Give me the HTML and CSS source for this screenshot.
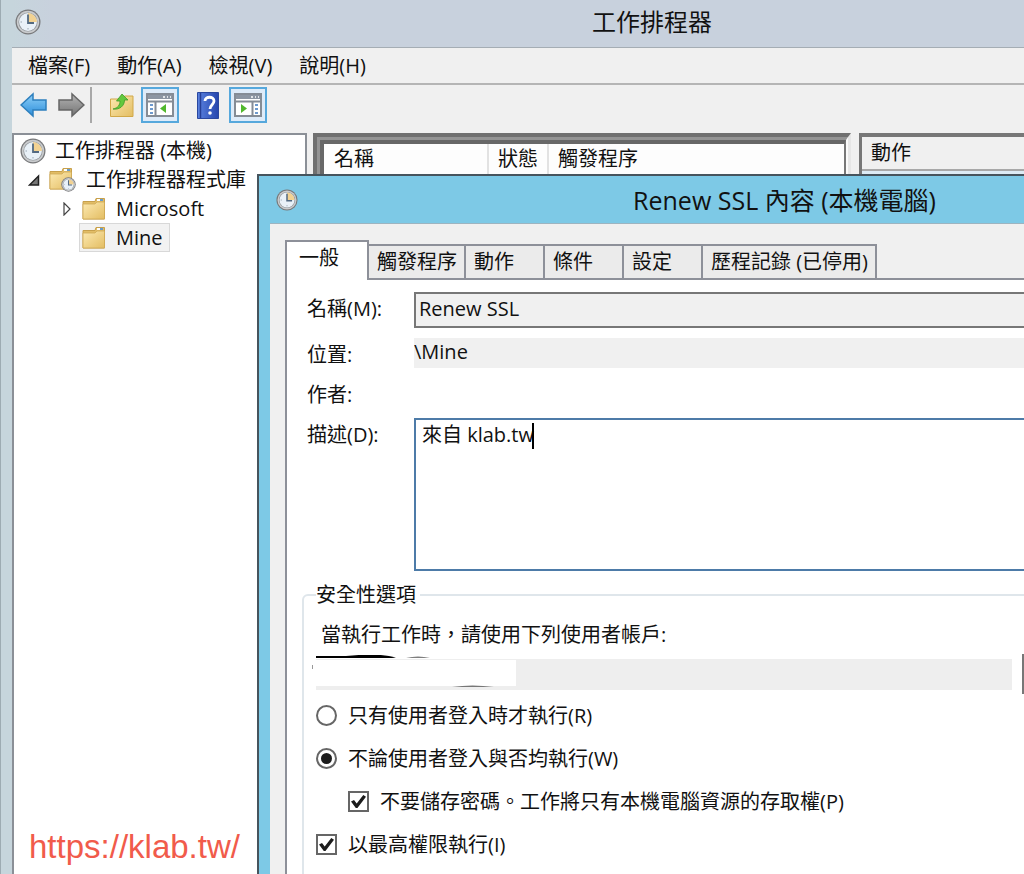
FILE: index.html
```html
<!DOCTYPE html>
<html lang="zh-Hant">
<head>
    <meta charset="UTF-8">
    <meta name="viewport" content="width=device-width, initial-scale=1.0">
    <title>工作排程器</title>
    <link rel="stylesheet" href="styles.css">
</head>
<body>
    <!-- shared icons -->
    <svg class="symbols" aria-hidden="true">
        <linearGradient id="folder-fill" x1="0" y1="0" x2="1" y2="1">
            <stop offset="0" stop-color="#fdeab2"/>
            <stop offset="1" stop-color="#e3bd62"/>
        </linearGradient>
        <linearGradient id="blue-fill" x1="0" y1="0" x2="0" y2="1">
            <stop offset="0" stop-color="#8fd0f8"/>
            <stop offset="1" stop-color="#2c8edb"/>
        </linearGradient>
        <linearGradient id="gray-fill" x1="0" y1="0" x2="0" y2="1">
            <stop offset="0" stop-color="#b4b4b4"/>
            <stop offset="1" stop-color="#747474"/>
        </linearGradient>
        <linearGradient id="help-fill" x1="0" y1="0" x2="1" y2="0">
            <stop offset="0" stop-color="#5b83e0"/>
            <stop offset="1" stop-color="#2545ad"/>
        </linearGradient>
        <symbol id="clock" viewBox="0 0 26 26">
            <circle cx="13" cy="13" r="12.5" fill="#77787a"/>
            <circle cx="13" cy="13" r="11.2" fill="#c9cbcd"/>
            <circle cx="13" cy="13" r="9.6" fill="#8f9499"/>
            <circle cx="13" cy="13" r="8.9" fill="#e9f1f8"/>
            <path d="M13 13V4.1A8.9 8.9 0 0 1 21.9 13Z" fill="#f2d292"/>
            <path d="M13 5.5V14H19" fill="none" stroke="#536a82" stroke-width="1.8"/>
            <path d="M5.5 13h1.5M13 19v1.5" stroke="#9aa7b3"/>
        </symbol>
        <symbol id="folder" viewBox="0 0 24 24">
            <path d="M1 4.5h12l1-3h8.5v20.5H1Z" fill="#e2bd66" stroke="#c7a04c"/>
            <rect x="15" y="2" width="6" height="2" fill="#fff"/>
            <rect x="18" y="2" width="3" height="2" fill="#6a9cc8"/>
            <path d="M1 7h12l2-2h7.5v17H1Z" fill="url(#folder-fill)" stroke="#cfa955" stroke-width=".8"/>
        </symbol>
    </svg>

    <div class="window">
        <header class="title-bar">
            <svg class="icon-clock"><use href="#clock"/></svg>
            <h1 class="title-text">工作排程器</h1>
        </header>

        <div class="client">
            <nav class="menu-bar">
                <button class="menu-item">檔案(F)</button>
                <button class="menu-item">動作(A)</button>
                <button class="menu-item">檢視(V)</button>
                <button class="menu-item">說明(H)</button>
            </nav>

            <div class="toolbar">
                <button class="tool" aria-label="上一頁">
                    <svg width="28" height="26" viewBox="0 0 28 26"><path d="M1 13 13 2v6h13v10H13v6Z" fill="url(#blue-fill)" stroke="#2d7fbd" stroke-width="1.5"/></svg>
                </button>
                <button class="tool" aria-label="下一頁">
                    <svg width="28" height="26" viewBox="0 0 28 26"><path d="M27 13 15 2v6H2v10h13v6Z" fill="url(#gray-fill)" stroke="#666" stroke-width="1.5"/></svg>
                </button>
                <span class="tool-line"></span>
                <button class="tool tool-up" aria-label="上移一層">
                    <svg width="26" height="26" viewBox="0 0 26 26">
                        <path d="M1.5 7h11l3-3H24v20.5H1.5Z" fill="url(#folder-fill)" stroke="#d1a848"/>
                        <path d="M4 17c5-1 7-4 7-8H7.5L13 2l6 6h-3.5c0 6-5 10-11.5 9Z" fill="#63c83d" stroke="#3d9b28" stroke-width=".8"/>
                    </svg>
                </button>
                <button class="tool tool-on" aria-label="顯示/隱藏主控台樹狀目錄">
                    <svg width="28" height="24" viewBox="0 0 28 24">
                        <path d="M1 1h26v22H1Z" fill="#fff" stroke="#858c96" stroke-width="2"/>
                        <path d="M2 2h24v4H2Z" fill="#8d96a3"/>
                        <path d="M17 4h2m2 0h1m2 0h1" stroke="#fff" stroke-width="1.5"/>
                        <path d="M1 8.5h26M9.5 9v14" stroke="#858c96" stroke-width="2"/>
                        <path d="M4 12h3m-3 4h3m-3 4h3" stroke="#3f78bd" stroke-width="1.5"/>
                        <path d="M20 11v9l-6-4.5Z" fill="#51b82e"/>
                    </svg>
                </button>
                <button class="tool tool-help" aria-label="說明">
                    <svg width="22" height="27" viewBox="0 0 22 27">
                        <path d="M.5.5h21v26H.5Z" fill="url(#help-fill)" stroke="#2a479f"/>
                        <path d="M3.5 1v25" stroke="#263f95" stroke-width="1.5"/>
                        <path d="M8 9c0-5 9-5 9 0 0 3.5-4 4-4 8" fill="none" stroke="#fff" stroke-width="2.8"/>
                        <circle cx="13" cy="21" r="1.8" fill="#fff"/>
                    </svg>
                </button>
                <button class="tool tool-on" aria-label="顯示/隱藏執行窗格">
                    <svg width="28" height="24" viewBox="0 0 28 24">
                        <path d="M1 1h26v22H1Z" fill="#fff" stroke="#858c96" stroke-width="2"/>
                        <path d="M2 2h24v4H2Z" fill="#8d96a3"/>
                        <path d="M17 4h2m2 0h1m2 0h1" stroke="#fff" stroke-width="1.5"/>
                        <path d="M1 8.5h26M18.5 9v14" stroke="#858c96" stroke-width="2"/>
                        <path d="M21 12h3m-3 4h3m-3 4h3" stroke="#3f78bd" stroke-width="1.5"/>
                        <path d="M7 11v9l6-4.5Z" fill="#51b82e"/>
                    </svg>
                </button>
            </div>

            <div class="panes">
                <ul class="tree">
                    <li class="tree-row">
                        <svg class="icon-clock"><use href="#clock"/></svg>
                        <span>工作排程器 (本機)</span>
                    </li>
                    <li class="tree-row level-1">
                        <svg class="twisty" viewBox="0 0 12 14"><path d="M10.5 3v9H1.5Z" fill="#777" stroke="#222" stroke-width="1.5"/></svg>
                        <svg class="icon-library" viewBox="0 0 28 26">
                            <use href="#folder" width="24" height="24"/>
                            <use href="#clock" x="12" y="10" width="15" height="15"/>
                        </svg>
                        <span>工作排程器程式庫</span>
                    </li>
                    <li class="tree-row level-2">
                        <svg class="twisty" viewBox="0 0 12 14"><path d="M3 1v12l6-6Z" fill="#fff" stroke="#444" stroke-width="1.2"/></svg>
                        <span class="node">
                            <svg class="icon-folder"><use href="#folder"/></svg>
                            <span>Microsoft</span>
                        </span>
                    </li>
                    <li class="tree-row level-2">
                        <span class="twisty"></span>
                        <span class="node selected">
                            <svg class="icon-folder"><use href="#folder"/></svg>
                            <span>Mine</span>
                        </span>
                    </li>
                </ul>

                <div class="list-frame">
                    <div class="list-bevel">
                        <div class="list-body">
                            <table class="task-list">
                                <thead>
                                    <tr>
                                        <th class="col-name">名稱</th>
                                        <th class="col-state">狀態</th>
                                        <th>觸發程序</th>
                                    </tr>
                                </thead>
                            </table>
                        </div>
                    </div>
                </div>

                <aside class="actions">
                    <h2 class="actions-title">動作</h2>
                </aside>
            </div>
        </div>

        <section class="dialog">
            <header class="dialog-title">
                <svg class="icon-small"><use href="#clock"/></svg>
                <h2 class="title-text">Renew SSL 內容 (本機電腦)</h2>
            </header>

            <div class="dialog-body">
                <div class="tabs">
                    <button class="tab active">一般</button>
                    <button class="tab">觸發程序</button>
                    <button class="tab">動作</button>
                    <button class="tab">條件</button>
                    <button class="tab">設定</button>
                    <button class="tab">歷程記錄 (已停用)</button>
                </div>

                <form class="panel">
                    <div class="fields">
                        <label for="name">名稱(M):</label>
                        <input class="box" id="name" type="text" value="Renew SSL" readonly>
                        <label for="location">位置:</label>
                        <input class="plain" id="location" type="text" value="\Mine" readonly>
                        <span class="author">作者:</span>
                        <span></span>
                        <label for="desc">描述(D):</label>
                        <div class="desc-wrap">
                            <textarea class="desc" id="desc">來自 klab.tw</textarea>
                            <span class="caret"></span>
                        </div>
                    </div>

                    <fieldset class="security">
                        <legend>安全性選項</legend>
                        <label class="prompt" for="account">當執行工作時，請使用下列使用者帳戶:</label>
                        <div class="account-row">
                            <div class="account-wrap">
                                <input class="account" id="account" type="text" readonly>
                                <svg class="smear" viewBox="0 0 210 36">
                                    <path d="M4 5H204V31H4Z" fill="#fff"/>
                                    <path d="M4 1H34C54-1 72-1 84 2.5L80 3H4ZM94 2.5q12-1.500 24 0Z" fill="#000"/>
                                    <path d="M140 32q20-3 42 0Z" fill="#777"/>
                                    <path d="M.5 10v4" stroke="#999"/>
                                </svg>
                            </div>
                            <button class="change" type="button" aria-label="變更使用者或群組"></button>
                        </div>
                        <label class="option"><input type="radio" name="logon">只有使用者登入時才執行(R)</label>
                        <label class="option"><input type="radio" name="logon" checked>不論使用者登入與否均執行(W)</label>
                        <label class="option nested"><input type="checkbox" checked>不要儲存密碼。工作將只有本機電腦資源的存取權(P)</label>
                        <label class="option"><input type="checkbox" checked>以最高權限執行(I)</label>
                    </fieldset>
                </form>
            </div>
        </section>
    </div>

    <a class="watermark" href="https://klab.tw/">https://klab.tw/</a>
</body>
</html>
```
FILE: styles.css
```css
* {
    box-sizing: border-box;
}
body {
    margin: 0;
    overflow: hidden;
    color: #111;
    font-family: "Open Sans", "Noto Sans CJK TC", sans-serif;
    font-size: 20px;
    line-height: 24px;
}
button, input, textarea {
    font: inherit;
    color: inherit;
    margin: 0;
    border-radius: 0;
}
h1, h2 {
    margin: 0;
    font-weight: normal;
}
.symbols {
    position: absolute;
    width: 0;
    height: 0;
}

/* main window, runs past the right edge of the screen */
.window {
    position: relative;
    display: flex;
    flex-direction: column;
    height: 100vh;
    margin-right: -287px;
    padding-left: 11px;
    background: #c6d5dc;
    border-left: 1px solid #9dabb2;
}
.title-bar {
    display: flex;
    align-items: center;
    height: 47px;
    padding: 0 48px 3px 3px;
    background: linear-gradient(90deg, #c6d5dc, #c8d1dd 40px);
}
.title-text {
    flex: 1;
    font-size: 24px;
    line-height: 32px;
    text-align: center;
}
.icon-clock {
    flex: none;
    width: 26px;
    height: 26px;
}
.client {
    flex: 1;
    display: flex;
    flex-direction: column;
    background: #f0f0f0;
    border-top: 1px solid #a5adb4;
}
.menu-bar {
    display: flex;
    gap: 27px;
    height: 37px;
    padding-left: 16px;
    border-bottom: 2px solid #b5b5b5;
}
.menu-item {
    padding: 0;
    border: 0;
    background: none;
}

.toolbar {
    display: flex;
    align-items: center;
    height: 48px;
    padding: 0 0 8px 8px;
}
.tool {
    display: flex;
    align-items: center;
    justify-content: center;
    width: 38px;
    height: 36px;
    padding: 0;
    border: 0;
    background: none;
}
.tool:first-child {
    width: 28px;
    margin-right: 4px;
}
.tool-line {
    width: 2px;
    height: 36px;
    background: #a8a8a8;
}
.tool-up {
    width: 26px;
    margin: 0 6px 0 17px;
}
.tool-on {
    background: #deebf9;
    border: 2px solid #56a8dc;
}
.tool-help {
    width: 22px;
    margin: 0 10px 0 18px;
}

.panes {
    flex: 1;
    display: flex;
}
.tree {
    flex: none;
    width: 295px;
    margin: 0 6px 0 0;
    padding: 1px 0 0 6px;
    list-style: none;
    background: #fff;
    border: 2px solid #8b9097;
    border-bottom: 0;
}
.tree-row {
    display: flex;
    align-items: center;
    gap: 9px;
    height: 29px;
    white-space: nowrap;
}
.level-1 {
    padding-left: 8px;
}
.level-2 {
    gap: 6px;
    padding-left: 41px;
}
.twisty {
    flex: none;
    width: 12px;
    height: 14px;
}
.icon-library {
    width: 28px;
    height: 26px;
}
.icon-folder {
    width: 24px;
    height: 24px;
}
.node {
    display: flex;
    align-items: center;
    gap: 10px;
    height: 29px;
    padding: 0 6px 0 2px;
    border: 1px solid transparent;
}
.selected {
    background: #f2f2f2;
    border-color: #d8d8d8;
}

/* sunken frame made of three bevels */
.list-frame {
    flex: none;
    display: flex;
    width: 538px;
    margin-right: 8px;
    border-style: solid;
    border-width: 4px 3px 0 4px;
    border-color: #707070 #e6e6e6 #e6e6e6 #707070;
}
.list-bevel {
    flex: 1;
    display: flex;
    border-style: solid;
    border-width: 3px 2px 0 3px;
    border-color: #949494 #fafafa #fafafa #949494;
}
.list-body {
    flex: 1;
    border-style: solid;
    border-width: 4px 2px 0 4px;
    border-color: #676767 #777 #777 #676767;
    background: #fdfdfd;
}
.task-list {
    border-collapse: collapse;
}
.task-list th {
    height: 30px;
    padding: 0 9px;
    font-weight: normal;
    text-align: left;
}
.task-list .col-name {
    width: 164px;
    padding-left: 10px;
}
.task-list .col-name, .task-list .col-state {
    border-right: 2px solid #e2e2e2;
}
.actions {
    flex: 1;
    border: solid #777;
    border-width: 4px 0 0 3px;
    background: #dcebf5;
}
.actions-title {
    height: 34px;
    padding: 4px 0 0 9px;
    font-size: 20px;
    background: #f0f0f0;
    border-bottom: 2px solid #a8a8a8;
}

/* task properties dialog */
.dialog {
    position: absolute;
    top: 174px;
    right: 0;
    bottom: 0;
    left: 256px;
    display: flex;
    flex-direction: column;
    overflow: hidden;
    padding-left: 11px;
    background: #7dc9e6;
    border: solid #46545d;
    border-width: 2px 0 0 2px;
}
.dialog-title {
    display: flex;
    align-items: center;
    flex: none;
    height: 47px;
    padding: 0 40px 0 6px;
}
.dialog-title .title-text {
    font-size: 25px;
}
.icon-small {
    width: 22px;
    height: 22px;
}
.dialog-body {
    flex: 1;
    display: flex;
    flex-direction: column;
    padding: 16px 0 0 15px;
    background: #f0f0f0;
    border-top: 1px solid #9db4c0;
}
.tabs {
    display: flex;
    align-items: flex-end;
    flex: none;
    height: 38px;
}
.tab {
    height: 34px;
    min-width: 79px;
    padding: 0 7px 0 8px;
    text-align: left;
    background: #ebebeb;
    border: 2px solid #8d9099;
    border-width: 2px 2px 0 0;
}
.tab.active {
    z-index: 1;
    width: 84px;
    height: 40px;
    margin-bottom: -2px;
    padding: 0 12px 6px;
    background: #fff;
    border-left-width: 2px;
}
.panel {
    flex: 1;
    padding: 12px 0 0 15px;
    background: #fff;
    border: solid #8d9099;
    border-width: 2px 0 0 2px;
}
.fields {
    display: grid;
    grid-template-columns: 107px 1fr;
    grid-template-rows: 36px 30px 30px 153px;
    row-gap: 10px;
    padding-left: 5px;
}
.fields label, .author {
    padding-top: 5px;
}
.box, .plain {
    padding: 0 3px 2px;
    border: 2px solid #777;
    background: #f0f0f0;
}
.plain {
    padding: 0 0 2px;
    border: 0;
}
.desc-wrap {
    position: relative;
}
.desc {
    display: block;
    width: 100%;
    height: 100%;
    padding: 3px 6px;
    resize: none;
    outline: none;
    border: 2px solid #4d7ba8;
    background: #fff;
}
.caret {
    position: absolute;
    top: 5px;
    left: 118px;
    width: 2px;
    height: 26px;
    background: #000;
}

.security {
    min-height: 400px;
    margin: 12px 0 0;
    padding: 9px 0 0 12px;
    border: 2px solid #dfe6eb;
    border-radius: 6px;
}
.security legend {
    padding: 0 4px 0 0;
}
.prompt {
    display: block;
    padding-left: 5px;
    line-height: 38px;
}
.account-row {
    display: flex;
    align-items: center;
    gap: 10px;
    height: 40px;
}
.account-wrap {
    position: relative;
    width: 696px;
    height: 31px;
}
.account {
    display: block;
    width: 100%;
    height: 100%;
    border: 0;
    background: #eee;
}
.smear {
    position: absolute;
    top: -4px;
    left: -4px;
    width: 210px;
    height: 36px;
}
.change {
    flex: 1;
    height: 40px;
    background: #e5e5e5;
    border: 2px solid #777;
}
.option {
    display: flex;
    align-items: center;
    gap: 11px;
    height: 43px;
}
.nested {
    padding-left: 32px;
}
.option input {
    appearance: none;
    display: grid;
    place-items: center;
    flex: none;
    width: 21px;
    height: 21px;
    border: 2px solid #666;
    background: #fff;
}
.option input[type="radio"] {
    border-radius: 50%;
}
.option input[type="radio"]:checked::before {
    content: "";
    width: 11px;
    height: 11px;
    border-radius: 50%;
    background: #1c1c1c;
}
.option input[type="checkbox"]:checked::before {
    content: "";
    width: 15px;
    height: 13px;
    background: #1c1c1c;
    clip-path: polygon(0 50%, 20% 38%, 38% 65%, 82% 0, 100% 14%, 43% 100%, 32% 100%);
}

.watermark {
    position: absolute;
    left: 29px;
    bottom: 8px;
    color: #f15b4b;
    font-family: "Liberation Sans", sans-serif;
    font-size: 33px;
    line-height: 38px;
    text-decoration: none;
}
```
